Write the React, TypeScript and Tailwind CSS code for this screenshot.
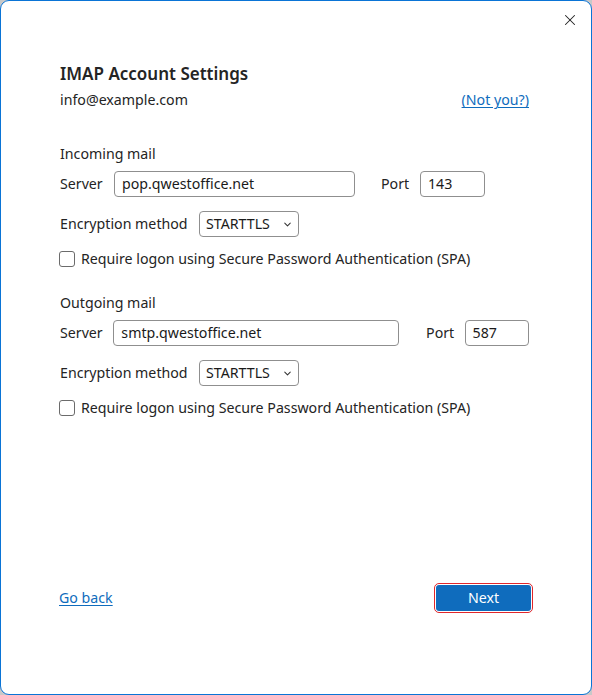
import { ChevronDown, X } from "lucide-react";

function TextField({ value, width }: { value: string; width: string }) {
  return (
    <div
      className={`${width} h-[26px] flex items-center px-[7px] border border-[#8f8f8f] rounded-[4px] bg-white text-[14.2px] text-[#1a1a1a]`}
    >
      {value}
    </div>
  );
}

function EncryptionSelect() {
  return (
    <div className="w-[100px] h-[26px] flex items-center justify-between pl-[6px] pr-[5px] border border-[#8f8f8f] rounded-[4px] bg-white text-[14.2px] text-[#1a1a1a]">
      <span>STARTTLS</span>
      <ChevronDown size={11} strokeWidth={2.2} className="text-[#333]" />
    </div>
  );
}

function MailSection({
  title,
  server,
  port,
  serverWidth,
  portGap,
}: {
  title: string;
  server: string;
  port: string;
  serverWidth: string;
  portGap: string;
}) {
  return (
    <div className="flex flex-col">
      <div className="h-[20px] leading-[20px]">{title}</div>
      <div className="flex items-center mt-[7px] h-[26px]">
        <span className="w-[54px]">Server</span>
        <TextField value={server} width={serverWidth} />
        <span className={`${portGap} w-[39px]`}>Port</span>
        <TextField value={port} width="w-[65px]" />
      </div>
      <div className="flex items-center mt-[14px] h-[26px]">
        <span className="w-[139px]">Encryption method</span>
        <EncryptionSelect />
      </div>
      <label className="flex items-center mt-[11px] h-[22px]">
        <span className="w-[16px] h-[16px] border border-[#6b6b6b] rounded-[3px] bg-white ml-[-1px]" />
        <span className="ml-[6px]">
          Require logon using Secure Password Authentication (SPA)
        </span>
      </label>
    </div>
  );
}

export default function App() {
  return (
    <div className="w-[592px] h-[695px] bg-[#c8c8c8]">
      <div
        className="relative w-full h-full bg-white border border-[#0a74d6] rounded-[9px] text-[14.2px] text-[#242424] flex flex-col"
        style={{ fontFamily: '"Segoe UI", "Noto Sans", "Open Sans", sans-serif' }}
      >
        <button className="absolute top-[7px] right-[9px] w-[24px] h-[24px] flex items-center justify-center text-[#222]">
          <X size={18} strokeWidth={1.4} />
        </button>

        <div className="flex flex-col pl-[59px] pr-[62px] pt-[61px]">
          <h1 className="text-[17px] font-semibold leading-[24px]">
            IMAP Account Settings
          </h1>
          <div className="flex justify-between items-center mt-[4px] h-[20px]">
            <span>info@example.com</span>
            <a className="text-[#0f6cbd] underline underline-offset-2 cursor-pointer">
              (Not you?)
            </a>
          </div>

          <div className="mt-[34px]">
            <MailSection
              title="Incoming mail"
              server="pop.qwestoffice.net"
              port="143"
              serverWidth="w-[241px]"
              portGap="ml-[26px]"
            />
          </div>
          <div className="mt-[23px]">
            <MailSection
              title="Outgoing mail"
              server="smtp.qwestoffice.net"
              port="587"
              serverWidth="w-[289px]"
              portGap="ml-[27px]"
            />
          </div>
        </div>

        <div className="mt-auto mb-[81px] flex justify-between items-center pl-[58px] pr-[58px]">
          <a className="text-[#0f6cbd] underline underline-offset-2 cursor-pointer">
            Go back
          </a>
          <button className="w-[99px] h-[30px] rounded-[5px] border border-[#e0262b] p-[1px]">
            <span className="w-full h-full flex items-center justify-center rounded-[3px] bg-[#0f6cbd] text-white text-[14.2px]">
              Next
            </span>
          </button>
        </div>
      </div>
    </div>
  );
}
